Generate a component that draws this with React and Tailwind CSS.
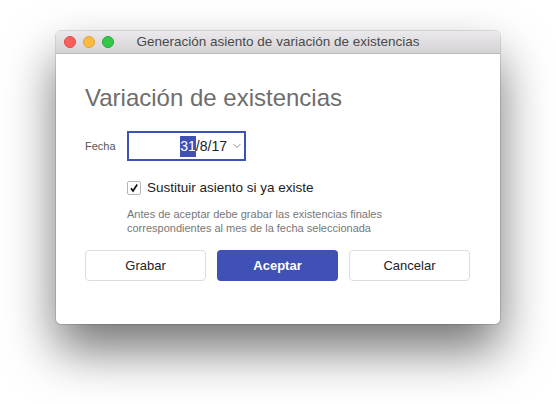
import { ChevronDown } from 'lucide-react'

export default function App() {
  return (
    <div className="w-[556px] h-[404px] bg-white pl-[56px] pt-[31px]" style={{ fontFamily: '"Liberation Sans", Arial, sans-serif' }}>
      <div className="w-[444px] h-[293px] bg-white rounded-[5px] overflow-hidden flex flex-col shadow-[0_26px_50px_rgba(0,0,0,0.55),0_0_0_1px_rgba(0,0,0,0.12)]">
        {/* Title bar */}
        <div className="h-[23px] flex items-center relative bg-gradient-to-b from-[#ebe9eb] to-[#d5d3d5] border-b border-[#b9b9b9]">
          <div className="flex items-center gap-[7px] pl-[8px]">
            <span className="w-[12px] h-[12px] rounded-full bg-[#fc605c] border border-[#de4a45]" />
            <span className="w-[12px] h-[12px] rounded-full bg-[#fdbc40] border border-[#dea235]" />
            <span className="w-[12px] h-[12px] rounded-full bg-[#34c84a] border border-[#27aa35]" />
          </div>
          <div className="absolute inset-0 flex items-center justify-center text-[13.5px] text-[#4a4a4a]">
            Generación asiento de variación de existencias
          </div>
        </div>

        {/* Body */}
        <div className="flex-1 px-[29px] pt-[29px]">
          <h1 className="text-[24px] leading-[30px] text-[#6e6e6e]">Variación de existencias</h1>

          <div className="flex items-center mt-[18px]">
            <span className="w-[42px] text-[11px] text-[#555]">Fecha</span>
            <div className="w-[119px] h-[30px] border-2 border-[#3f51b5] flex items-center justify-end pr-[1px] text-[14px] text-[#222]">
              <span className="bg-[#3f51b5] text-white">31</span>
              <span>/8/17</span>
              <ChevronDown size={12} strokeWidth={1.6} className="ml-[4px] text-[#6a6a6a]" />
            </div>
          </div>

          <label className="flex items-center mt-[17px] ml-[42px] gap-[6px] text-[13.5px] text-[#1c1c1c]">
            <span className="w-[14px] h-[14px] border border-[#b4b4b4] rounded-[2px] bg-white flex items-center justify-center">
              <svg width="10" height="10" viewBox="0 0 10 10">
                <path d="M2 5.2 L4 8 L8.2 1.5" fill="none" stroke="#111" strokeWidth="1.7" />
              </svg>
            </span>
            Sustituir asiento si ya existe
          </label>

          <p className="mt-[9px] ml-[42px] text-[11px] leading-[14px] text-[#777]">
            Antes de aceptar debe grabar las existencias finales<br />
            correspondientes al mes de la fecha seleccionada
          </p>

          <div className="flex gap-[11px] mt-[15px]">
            <button className="w-[121px] h-[31px] rounded-[4px] border border-[#dcdcdc] bg-white text-[13px] text-[#222]">Grabar</button>
            <button className="w-[121px] h-[31px] rounded-[4px] bg-[#3f51b5] text-[13px] font-bold text-white">Aceptar</button>
            <button className="w-[121px] h-[31px] rounded-[4px] border border-[#dcdcdc] bg-white text-[13px] text-[#222]">Cancelar</button>
          </div>
        </div>
      </div>
    </div>
  )
}
